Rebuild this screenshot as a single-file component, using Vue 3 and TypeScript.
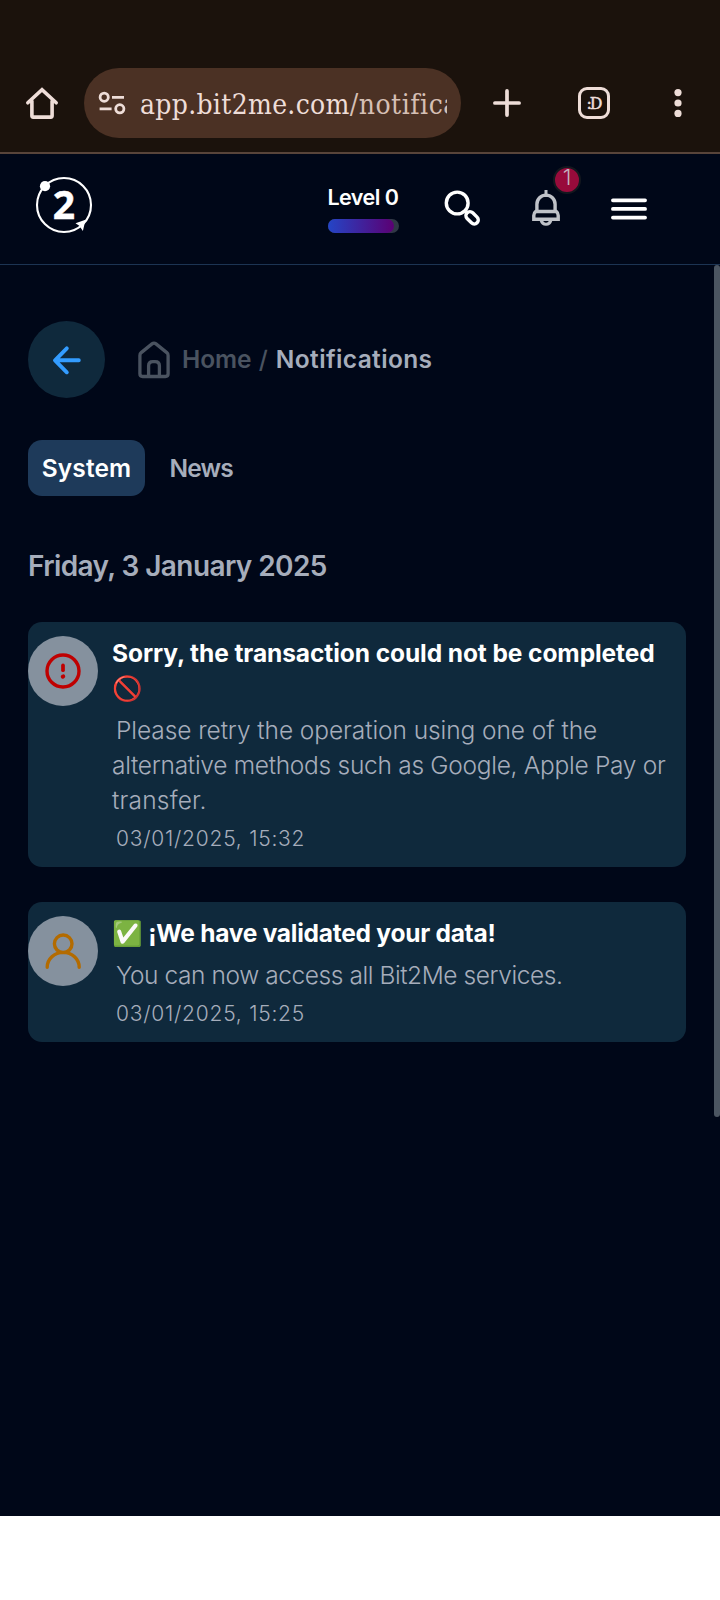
<script setup lang="ts">
interface Line {
  text: string
  fit?: string
}
interface Notice {
  id: number
  kind: 'alert' | 'user'
  title: Line[]
  body: Line[]
  time: string
}

const notices: Notice[] = [
  {
    id: 1,
    kind: 'alert',
    title: [{ text: 'Sorry, the transaction could not be completed', fit: 'fit-a' }, { text: '🚫' }],
    body: [
      { text: 'Please retry the operation using one of the', fit: 'fit-b indent' },
      { text: 'alternative methods such as Google, Apple Pay or', fit: 'fit-c' },
      { text: 'transfer.', fit: 'fit-d' },
    ],
    time: '03/01/2025, 15:32',
  },
  {
    id: 2,
    kind: 'user',
    title: [{ text: '✅ ¡We have validated your data!', fit: 'fit-e' }],
    body: [{ text: 'You can now access all Bit2Me services.', fit: 'fit-f indent' }],
    time: '03/01/2025, 15:25',
  },
]
</script>

<template>
  <div class="screen">
    <div class="chrome">
      <svg class="c-home" width="36" height="36" viewBox="0 0 36 36" fill="none" stroke="#eeddd8" stroke-width="3.6" stroke-linecap="round">
        <path d="M3.800 17.800 18 4.700l14.200 13.100M7.900 16v14.800q0 1.300 1.300 1.300h17.600q1.300 0 1.300-1.300V16" />
      </svg>
      <div class="pill">
        <svg width="28" height="24" viewBox="0 0 28 24" fill="none" stroke="#eeddd8" stroke-width="2.8">
          <circle cx="6.200" cy="6.200" r="4.100" />
          <path d="M14 6.300h12M1.600 17.800h12" />
          <circle cx="21.800" cy="17.800" r="4.100" />
        </svg>
        <div class="url"><span class="host">app.bit2me.com</span><span class="path">/notifica</span></div>
      </div>
      <svg class="c-plus" width="28" height="28" viewBox="0 0 28 28" stroke="#eeddd8" stroke-width="3.7" stroke-linecap="round">
        <path d="M14 1.900v24.200M1.900 14h24.200" />
      </svg>
      <div class="tabs-btn"><span>:D</span></div>
      <svg class="c-dots" width="8" height="28" viewBox="0 0 8 28" fill="#eeddd8">
        <circle cx="4" cy="3.600" r="3.600" /><circle cx="4" cy="14" r="3.600" /><circle cx="4" cy="24.400" r="3.600" />
      </svg>
    </div>

    <header class="top">
      <div class="logo">
        <svg width="60" height="60" viewBox="0 0 60 60">
          <circle cx="30" cy="30" r="27" fill="none" stroke="#fff" stroke-width="2.1" />
          <circle cx="11" cy="11.200" r="5.100" fill="#fff" />
          <path d="M51.500 44.800 41.500 48.300l3.800 2.400 3.600 5.300z" fill="#fff" />
        </svg>
        <b>2</b>
      </div>
      <div class="level">
        <span>Level 0</span>
        <div class="track"><div class="fill"></div></div>
      </div>
      <svg class="search" width="38" height="38" viewBox="0 0 38 38" fill="none" stroke="#fff" stroke-width="3.4">
        <circle cx="14.200" cy="14" r="10.900" />
        <path d="M22.200 21.600l3 3" />
        <rect x="21.900" y="25" width="14.200" height="8" rx="4" transform="rotate(45 29.300 29)" />
      </svg>
      <div class="bell">
        <svg width="30" height="38" viewBox="0 0 30 38" fill="none" stroke="#bfc2c8" stroke-width="3.4" stroke-linejoin="round">
          <path d="M15 1.400v4" stroke-linecap="square" stroke-width="3" />
          <path d="M5.900 21.500V14.200a9.100 9.100 0 0 1 18.200 0V21.500" />
          <path d="M4.800 21.500h20.400q2 1.400 2 4v3.700H2.800v-3.700q0-2.600 2-4z" stroke-linejoin="miter" />
          <path d="M10 30q1.200 4.200 5 4.200t5-4.200" stroke-width="3" />
        </svg>
        <span class="badge">1</span>
      </div>
      <svg class="menu" width="36" height="24" viewBox="0 0 36 24" stroke="#fff" stroke-width="3.7" stroke-linecap="round">
        <path d="M1.900 3.300h32.200M1.900 11.900h32.200M1.900 20.600h32.200" />
      </svg>
    </header>

    <main class="content">
      <nav class="crumbs">
        <div class="back">
          <svg width="32" height="32" viewBox="0 0 32 32" fill="none" stroke="#339cff" stroke-width="3.900" stroke-linecap="round" stroke-linejoin="round">
            <path d="M15.800 4.300 4 16.300l11.800 12M4.300 16.300h23.500" />
          </svg>
        </div>
        <svg class="home" width="34" height="38" viewBox="0 0 34 38" fill="none" stroke="#4a5360" stroke-width="3.300" stroke-linejoin="round">
          <path d="M2.900 14.400q0-1.700 1.300-2.800L15 2.900q2-1.600 4 0l10.800 8.700q1.300 1.100 1.300 2.800V32.800q0 2.700-2.700 2.700H5.600q-2.700 0-2.700-2.700z" />
          <path d="M11.600 35V24.800q0-4.200 4.200-4.200h2.400q4.200 0 4.200 4.200V35" />
        </svg>
        <span class="c-link">Home</span><span class="slash">/</span><span class="here">Notifications</span>
      </nav>

      <div class="tabs">
        <div class="tab on">System</div>
        <div class="tab">News</div>
      </div>

      <h2>Friday, 3 January 2025</h2>

      <article v-for="n in notices" :key="n.id" class="card">
        <div class="avatar">
          <svg v-if="n.kind === 'alert'" width="42" height="42" viewBox="0 0 42 42" fill="none" stroke="#bf0000" stroke-width="3.400" stroke-linecap="round">
            <circle cx="21" cy="21" r="16" />
            <path d="M21 15.400v4.800" stroke-width="3.700" />
            <path d="M20.800 26.700l.4-.2" stroke-width="4.100" />
          </svg>
          <svg v-else width="42" height="42" viewBox="0 0 42 42" fill="none" stroke="#b36b00" stroke-width="3.400" stroke-linecap="round">
            <circle cx="21.200" cy="13.800" r="8.800" />
            <path d="M5.200 37.200a16 14.800 0 0 1 32 0" />
          </svg>
        </div>
        <div class="info">
          <div class="title"><div v-for="l in n.title" :key="l.text" :class="l.fit">{{ l.text }}</div></div>
          <div class="body"><div v-for="l in n.body" :key="l.text" :class="l.fit">{{ l.text }}</div></div>
          <div class="time">{{ n.time }}</div>
        </div>
      </article>
      <div class="scrollbar"></div>
    </main>
  </div>
</template>

<style>
body { margin: 0; background: #fff; }
</style>

<style scoped>
.screen { width: 720px; height: 1516px; background: #000718; display: flex; flex-direction: column; font-family: Inter, "Liberation Sans", sans-serif; white-space: nowrap; overflow: hidden; }
.chrome { box-sizing: border-box; height: 154px; flex: none; background: #1b120c; border-bottom: 2px solid #58443a; padding-top: 68px; display: flex; align-items: flex-start; }
.c-home { margin: 17px 0 0 24px; }
.pill { box-sizing: border-box; width: 377px; height: 70px; margin-left: 24px; border-radius: 35px; background: #4b3124; display: flex; align-items: center; padding-left: 14px; }
.url { margin: 3px 0 0 14px; width: 307px; overflow: hidden; font: 28px/40px "DejaVu Serif Condensed", "DejaVu Serif", serif; font-stretch: condensed; color: #eeddd8; }
.host { letter-spacing: .3px; }
.path { color: #d5bfb4; letter-spacing: .5px; }
.c-plus { margin: 21px 0 0 32px; }
.tabs-btn { box-sizing: border-box; width: 32px; height: 32px; margin: 19px 0 0 57px; border: 3.700px solid #eeddd8; border-radius: 9px; color: #eeddd8; display: flex; align-items: center; justify-content: center; font: 17.500px/20px "DejaVu Serif Condensed", "DejaVu Serif", serif; font-stretch: condensed; letter-spacing: -2px; padding-right: 1px; -webkit-text-stroke: .5px #eeddd8; }
.c-dots { margin: 21px 0 0 64px; }

.top { box-sizing: border-box; height: 111px; flex: none; border-bottom: 1px solid #1c3453; display: flex; align-items: flex-start; }
.logo { position: relative; width: 60px; height: 60px; margin: 21px 0 0 34px; }
.logo b { position: absolute; left: 0; width: 60px; top: -1px; text-align: center; font: 700 39px/60px "Open Sans", sans-serif; color: #fff; -webkit-text-stroke: .4px #fff; }
.logo svg { display: block; }
.level { width: 71px; margin: 29px 0 0 234px; color: #fff; }
.level span { display: block; font-weight: 600; font-size: 21.500px; line-height: 28px; letter-spacing: -.55px; margin-left: -.5px; }
.track { margin-top: 8px; height: 14px; border-radius: 7px; background: #303846; }
.fill { width: 66px; height: 14px; border-radius: 7px; background: linear-gradient(90deg, #2445c6, #5b0073); }
.search { margin: 35px 0 0 44px; }
.bell { position: relative; margin: 36px 0 0 50px; width: 30px; height: 38px; }
.badge { position: absolute; left: 22px; top: -24px; width: 24px; height: 24px; border: 2px solid #13181f; border-radius: 50%; background: #980b3b; color: #c4b2bd; font-size: 22px; font-weight: 300; line-height: 19px; text-align: center; }
.menu { margin: 43px 0 0 50px; }

.content { position: relative; flex: 1; padding: 56px 34px 0 28px; }
.crumbs { display: flex; align-items: center; height: 77px; font-size: 24.5px; line-height: 35px; font-weight: 600; }
.back { width: 77px; height: 77px; border-radius: 50%; background: #0f293c; display: flex; align-items: center; justify-content: center; }
.home { margin: 1px 0 0 32px; }
.c-link { color: #4a5360; margin-left: 11px; letter-spacing: -.1px; }
.slash { color: #4a5360; margin-left: 7.500px; width: 17px; font-weight: 500; }
.here { color: #a6adbb; letter-spacing: .38px; }
.tabs { display: flex; margin-top: 42px; height: 56px; font-size: 24.5px; line-height: 56px; font-weight: 600; }
.tab { color: #a6adbb; margin-left: 24.500px; letter-spacing: -.850px; }
.tab.on { margin: 0; width: 117px; text-align: center; letter-spacing: .1px; border-radius: 14px; background: #1e3a5a; color: #fff; }
h2 { margin: 49px 0 0; height: 42px; line-height: 42px; font-size: 28px; font-weight: 600; letter-spacing: -.6px; color: #a6adbb; }
.card { box-sizing: border-box; display: flex; margin-top: 35px; padding: 14px 0 11px; border-radius: 14px; background: #0f293c; }
.avatar { width: 70px; height: 70px; border-radius: 50%; background: #85919e; display: flex; align-items: center; justify-content: center; }
.info { margin-left: 14px; font-size: 24.5px; line-height: 35px; color: #a6adbb; }
.title { color: #fff; font-weight: 700; }
.body { margin-top: 7px; font-weight: 300; }
.time { margin: 3px 0 0 4px; font-size: 21px; font-weight: 300; letter-spacing: .76px; }
.indent { margin-left: 4px; }
.fit-a { letter-spacing: -.079px; }
.fit-b { letter-spacing: -.077px; }
.fit-c { letter-spacing: -.285px; }
.fit-d { letter-spacing: .2px; }
.fit-e { letter-spacing: -.25px; }
.fit-f { letter-spacing: -.43px; }
.card + .scrollbar { position: absolute; right: 0; top: 0; width: 6px; height: 852px; border-radius: 3px; background: #4b5561; }
</style>
